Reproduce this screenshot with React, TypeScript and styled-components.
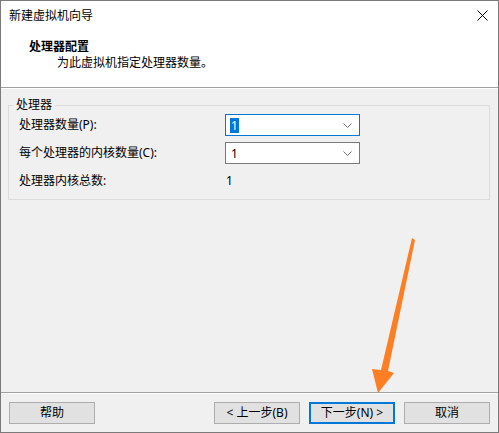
import * as React from "react";
import styled, { createGlobalStyle } from "styled-components";

const GlobalStyle = createGlobalStyle`
  * { box-sizing: border-box; }
  body {
    margin: 0;
    background: #ffffff;
    font-family: "Noto Sans", "Noto Sans CJK SC", sans-serif;
    font-size: 12px;
    color: #000;
  }
`;

const Window = styled.div`
  position: relative;
  width: 499px;
  height: 433px;
  border: 1px solid #7a7a7a;
  display: flex;
  flex-direction: column;
  background: #f0f0f0;
  overflow: hidden;
`;

const TitleBar = styled.div`
  height: 29px;
  background: #fff;
  display: flex;
  align-items: center;
  justify-content: space-between;
  padding: 0 10px 0 8px;
  font-size: 12px;
  line-height: 16px;
`;

const CloseIcon = styled.svg`
  width: 11px;
  height: 11px;
  display: block;
`;

const Header = styled.div`
  height: 57px;
  background: #fff;
  padding: 9px 0 0 28px;
  display: flex;
  flex-direction: column;
  line-height: 16px;
`;

const PageTitle = styled.div`
  font-weight: bold;
`;

const PageSubtitle = styled.div`
  padding-left: 28px;
`;

const Rule = styled.div`
  height: 2px;
  border-top: 1px solid #a0a0a0;
  border-bottom: 1px solid #ffffff;
`;

const Body = styled.div`
  flex: 1;
  padding: 8px 8px 0 7px;
`;

const GroupBox = styled.fieldset`
  margin: 0;
  padding: 0 10px 7px 10px;
  border: 1px solid #dcdcdc;
  min-width: 0;
`;

const Legend = styled.legend`
  margin-left: -6px;
  padding: 0 3px;
  line-height: 16px;
`;

const FieldGrid = styled.div`
  display: grid;
  grid-template-columns: 206px 135px;
  grid-auto-rows: 22px;
  row-gap: 6px;
  margin-top: 1px;
  align-items: center;
`;

const Label = styled.div`
  line-height: 16px;
  white-space: nowrap;
`;

const Combo = styled.div<{ $focused?: boolean }>`
  height: 22px;
  background: #fff;
  border: 1px solid ${(p) => (p.$focused ? "#0078d7" : "#7a7a7a")};
  display: flex;
  align-items: center;
  justify-content: space-between;
  padding: 0 4px 0 4px;
`;

const ComboValue = styled.span<{ $selected?: boolean }>`
  line-height: 15px;
  padding: 0 1px;
  background: ${(p) => (p.$selected ? "#0078d7" : "transparent")};
  color: ${(p) => (p.$selected ? "#fff" : "#000")};
`;

const Chevron = styled.svg`
  width: 9px;
  height: 5px;
  display: block;
  margin-right: 3px;
`;

const StaticValue = styled.div`
  padding-left: 1px;
  line-height: 16px;
`;

const Footer = styled.div`
  height: 38px;
  padding: 8px 8px;
  display: flex;
  align-items: stretch;
`;

const Spacer = styled.div`
  flex: 1;
`;

const ButtonGroup = styled.div`
  display: flex;
  gap: 9px;
`;

const Button = styled.button<{ $default?: boolean }>`
  width: 86px;
  height: 22px;
  padding: 0;
  background: #e1e1e1;
  border: ${(p) => (p.$default ? "2px solid #0078d7" : "1px solid #adadad")};
  font-family: inherit;
  font-size: 12px;
  color: #000;
  line-height: 16px;
`;

const ArrowLayer = styled.svg`
  position: absolute;
  top: -1px;
  left: -1px;
  width: 499px;
  height: 433px;
  pointer-events: none;
`;

const ComboArrow = () => (
  <Chevron viewBox="0 0 9 5">
    <path d="M0.5 0.5 L4.5 4.5 L8.5 0.5" fill="none" stroke="#707070" strokeWidth="1" />
  </Chevron>
);

const App: React.FC = () => {
  return (
    <>
      <GlobalStyle />
      <Window>
        <TitleBar>
          <span>新建虚拟机向导</span>
          <CloseIcon viewBox="0 0 11 11">
            <path d="M0.5 0.5 L10.5 10.5 M10.5 0.5 L0.5 10.5" stroke="#000" strokeWidth="1" />
          </CloseIcon>
        </TitleBar>
        <Header>
          <PageTitle>处理器配置</PageTitle>
          <PageSubtitle>为此虚拟机指定处理器数量。</PageSubtitle>
        </Header>
        <Rule />
        <Body>
          <GroupBox>
            <Legend>处理器</Legend>
            <FieldGrid>
              <Label>处理器数量(P):</Label>
              <Combo $focused>
                <ComboValue $selected>1</ComboValue>
                <ComboArrow />
              </Combo>
              <Label>每个处理器的内核数量(C):</Label>
              <Combo>
                <ComboValue>1</ComboValue>
                <ComboArrow />
              </Combo>
              <Label>处理器内核总数:</Label>
              <StaticValue>1</StaticValue>
            </FieldGrid>
          </GroupBox>
        </Body>
        <Rule />
        <Footer>
          <Button>帮助</Button>
          <Spacer />
          <ButtonGroup>
            <Button>&lt; 上一步(B)</Button>
            <Button $default>下一步(N) &gt;</Button>
            <Button>取消</Button>
          </ButtonGroup>
        </Footer>
        <ArrowLayer viewBox="0 0 499 433">
          <polygon
            points="412,238 415,240 388,371 394,373 378,393 372,369 381,370"
            fill="#fd7e23"
          />
        </ArrowLayer>
      </Window>
    </>
  );
};

export default App;
